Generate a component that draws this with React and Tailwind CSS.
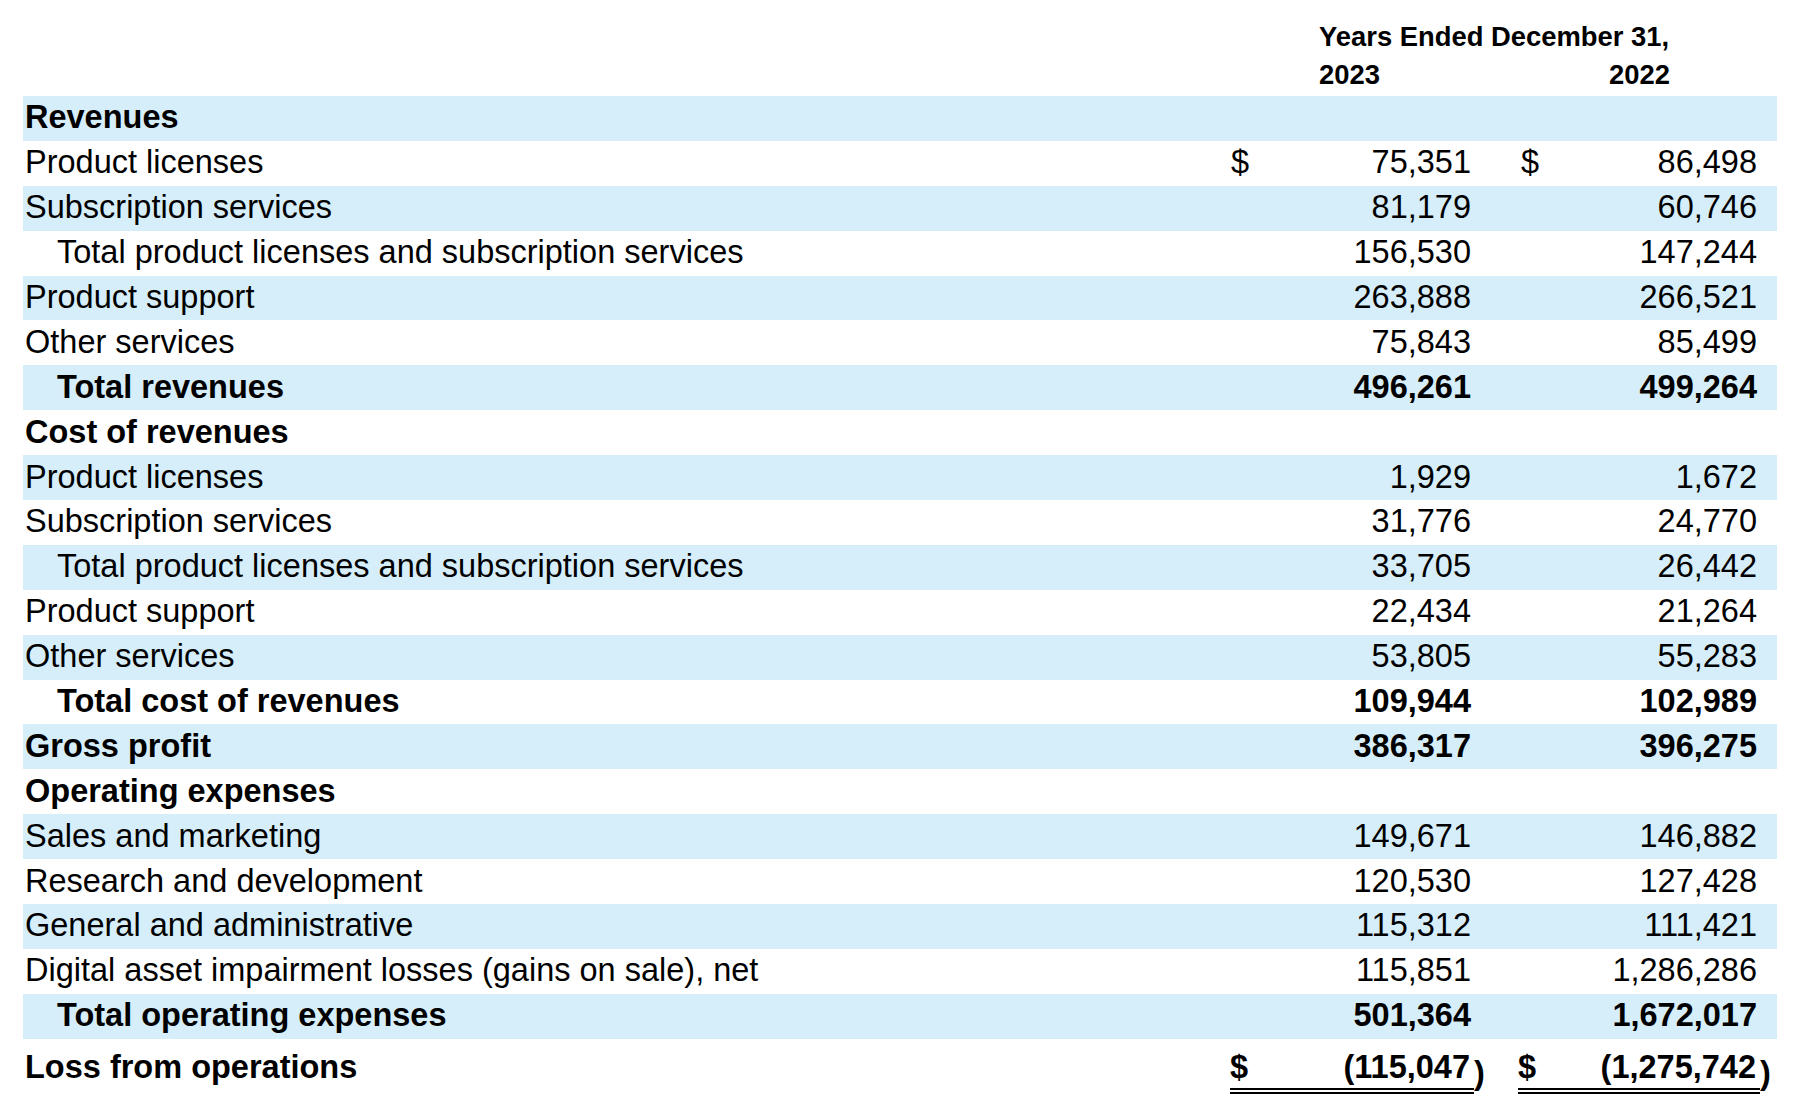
const ROWS = [
  { label: 'Revenues', bold: true, head: true },
  { label: 'Product licenses', a: '75,351', b: '86,498', dollar: true },
  { label: 'Subscription services', a: '81,179', b: '60,746' },
  { label: 'Total product licenses and subscription services', a: '156,530', b: '147,244', indent: true },
  { label: 'Product support', a: '263,888', b: '266,521' },
  { label: 'Other services', a: '75,843', b: '85,499' },
  { label: 'Total revenues', a: '496,261', b: '499,264', indent: true, bold: true },
  { label: 'Cost of revenues', bold: true, head: true },
  { label: 'Product licenses', a: '1,929', b: '1,672' },
  { label: 'Subscription services', a: '31,776', b: '24,770' },
  { label: 'Total product licenses and subscription services', a: '33,705', b: '26,442', indent: true },
  { label: 'Product support', a: '22,434', b: '21,264' },
  { label: 'Other services', a: '53,805', b: '55,283' },
  { label: 'Total cost of revenues', a: '109,944', b: '102,989', indent: true, bold: true },
  { label: 'Gross profit', a: '386,317', b: '396,275', bold: true },
  { label: 'Operating expenses', bold: true, head: true },
  { label: 'Sales and marketing', a: '149,671', b: '146,882' },
  { label: 'Research and development', a: '120,530', b: '127,428' },
  { label: 'General and administrative', a: '115,312', b: '111,421' },
  { label: 'Digital asset impairment losses (gains on sale), net', a: '115,851', b: '1,286,286' },
  { label: 'Total operating expenses', a: '501,364', b: '1,672,017', indent: true, bold: true },
];

const Row = ({ row, index }) => {
  const band = index % 2 === 0 ? 'bg-[#d6eef9]' : 'bg-white';
  const weight = row.bold ? 'font-bold' : 'font-normal';
  return (
    <div className={`grid grid-cols-[1176px_301px_277px] h-[44.9px] items-center pb-[2px] ${band}`}>
      <div className={`${row.indent ? 'pl-[34px]' : 'pl-[2px]'} ${weight} whitespace-nowrap`}>{row.label}</div>
      <div className={`flex items-center justify-between pl-[32px] pr-[29px] ${weight}`}>
        <span>{row.dollar ? '$' : ''}</span>
        <span>{row.a}</span>
      </div>
      <div className={`flex items-center justify-between pl-[21px] pr-[20px] ${weight}`}>
        <span>{row.dollar ? '$' : ''}</span>
        <span>{row.b}</span>
      </div>
    </div>
  );
};

const Negative = ({ value }) => (
  <span className="relative">
    ({value}
    <span className="absolute left-full top-[6px] ml-[4px]">)</span>
  </span>
);

export default function App() {
  return (
    <div className="w-[1794px] h-[1096px] bg-white text-black font-['Liberation_Sans',Arial,sans-serif] text-[32.5px] leading-[36px] pl-[23px] pr-[17px] overflow-hidden">
      {/* column heading */}
      <div className="grid grid-cols-[1176px_578px]">
        <div />
        <div className="pl-[120px] pr-[107px] pt-[20px] pb-[4px] font-bold text-[27.4px] leading-[34px]">
          <div className="whitespace-nowrap">Years Ended December 31,</div>
          <div className="flex justify-between mt-[4px]">
            <span>2023</span>
            <span>2022</span>
          </div>
        </div>
      </div>

      {ROWS.map((row, i) => (
        <Row key={i} row={row} index={i} />
      ))}

      {/* loss from operations */}
      <div className="grid grid-cols-[1176px_301px_277px] font-bold">
        <div className="pl-[2px] pt-[10px]">Loss from operations</div>
        <div className="ml-[31px] mr-[26px]">
          <div className="flex justify-between pt-[10px] pb-[3px] pr-[4px] border-b-[6px] border-double border-black">
            <span>$</span>
            <Negative value="115,047" />
          </div>
        </div>
        <div className="ml-[18px] mr-[17px]">
          <div className="flex justify-between pt-[10px] pb-[3px] pr-[4px] border-b-[6px] border-double border-black">
            <span>$</span>
            <Negative value="1,275,742" />
          </div>
        </div>
      </div>
    </div>
  );
}
